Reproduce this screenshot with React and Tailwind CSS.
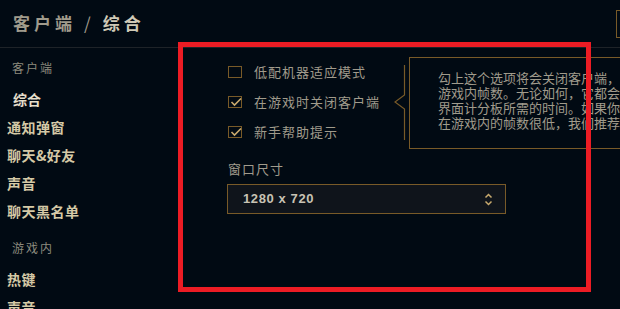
import { useState } from "react";

const sideItems = [
  { label: "客户端", type: "heading" },
  { label: "综合", type: "active" },
  { label: "通知弹窗" },
  { label: "聊天&好友" },
  { label: "声音" },
  { label: "聊天黑名单" },
  { label: "游戏内", type: "heading", gap: true },
  { label: "热键" },
  { label: "声音" },
];

const options = [
  { label: "低配机器适应模式", checked: false },
  { label: "在游戏时关闭客户端", checked: true, tip: true },
  { label: "新手帮助提示", checked: true },
];

const tipLines = [
  "勾上这个选项将会关闭客户端，以提高",
  "游戏内帧数。无论如何，它都会增加",
  "界面计分板所需的时间。如果你的电脑",
  "在游戏内的帧数很低，我们推荐你勾选",
];

const Checkbox = ({ checked, onClick }) => (
  <button
    onClick={onClick}
    className="relative w-[14px] h-[12px] border border-[#785a28] shrink-0"
  >
    {checked && (
      <svg className="absolute left-[1px] top-[0px]" width="12" height="10" viewBox="0 0 12 10">
        <path d="M1.5 5 L4.5 8 L11 1.5" stroke="#c8aa6e" strokeWidth="1.6" fill="none" />
      </svg>
    )}
  </button>
);

const Tooltip = () => (
  <div className="absolute left-[166px] top-[-30px] flex items-stretch">
    {/* left edge ornament with arrow */}
    <svg width="15" height="92" viewBox="0 0 15 92" className="shrink-0">
      <path d="M10.5 8 V38 L1 45 L10.5 52 V83" stroke="#785a28" strokeWidth="1.2" fill="none" />
    </svg>
    <div className="w-[300px] h-[92px] border border-[#785a28] bg-[#010a13] pl-[28px] pt-[12px]">
      {tipLines.map((line, i) => (
        <div key={i} className="text-[13px] leading-[15px] text-[#a09b8c] whitespace-nowrap">
          {line}
        </div>
      ))}
    </div>
  </div>
);

const App = () => {
  const [checks, setChecks] = useState(options.map((o) => o.checked));

  const toggle = (i) => {
    setChecks((prev) => prev.map((c, idx) => (idx === i ? !c : c)));
  };

  return (
    <div
      className="relative w-[620px] h-[309px] overflow-hidden bg-[#010a13]"
      style={{ fontFamily: '"Noto Sans CJK SC", "Liberation Sans", sans-serif' }}
    >
      {/* header */}
      <div className="flex items-center h-[48px] border-b border-[#1e2328] pl-[13px] pb-[2px]">
        <div className="flex items-center text-[17px] tracking-[4px] font-bold">
          <span className="text-[#a09b8c]">客户端</span>
          <span className="text-[#a09b8c] mx-[8px] font-normal">/</span>
          <span className="text-[#cfc9b6]">综合</span>
        </div>
        <div className="ml-auto mr-[-56px] mt-[2px] w-[60px] h-[28px] border border-[#785a28] shrink-0"></div>
      </div>

      <div className="flex">
        {/* sidebar */}
        <div className="w-[180px] pt-[6px] flex flex-col">
          {sideItems.map((item, i) => {
            if (item.type === "heading") {
              return (
                <div
                  key={i}
                  className={`h-[28px] flex items-center pl-[12px] text-[12px] tracking-[2px] text-[#8c8a7e] ${item.gap ? "mt-[9px]" : ""}`}
                >
                  {item.label}
                </div>
              );
            }
            if (item.type === "active") {
              return (
                <div key={i} className="h-[28px] mt-[3px] flex items-center pl-[13px] text-[14px] font-bold text-[#e6dfcb]">
                  {item.label}
                </div>
              );
            }
            return (
              <div
                key={i}
                className={`h-[28px] flex items-center pl-[7px] text-[14px] font-bold tracking-[0.5px] text-[#d5c9a6] ${i === 7 ? "mt-[3px]" : ""}`}
              >
                {item.label}
              </div>
            );
          })}
        </div>

        {/* content */}
        <div className="flex-1 pl-[48px] pt-[9px]">
          {options.map((opt, i) => (
            <div key={i} className="relative h-[30px] flex items-center gap-[12px]">
              <Checkbox checked={checks[i]} onClick={() => toggle(i)} />
              <span className="text-[13px] tracking-[1px] text-[#a09b8c] whitespace-nowrap">{opt.label}</span>
              {opt.tip && <Tooltip />}
            </div>
          ))}

          <div className="mt-[14px] h-[16px] flex items-center text-[13px] tracking-[1px] text-[#a09b8c]">
            窗口尺寸
          </div>

          <div className="mt-[7px] ml-[-1px] w-[279px] h-[30px] border border-[#785a28] bg-[#0f141b] flex items-center justify-between pl-[15px] pr-[12px]">
            <span
              className="text-[13px] font-bold tracking-[0.6px] text-[#c8c3b4]"
              style={{ fontFamily: '"Liberation Sans", sans-serif' }}
            >
              1280 x 720
            </span>
            <svg width="9" height="13" viewBox="0 0 9 13">
              <path d="M1.5 4.5 L4.5 1.5 L7.5 4.5" stroke="#c8aa6e" strokeWidth="1.5" fill="none" />
              <path d="M1.5 8.5 L4.5 11.5 L7.5 8.5" stroke="#c8aa6e" strokeWidth="1.5" fill="none" />
            </svg>
          </div>
        </div>
      </div>

      {/* red annotation frame */}
      <div className="absolute left-[178px] top-[42px] w-[413px] h-[250px] border-[5px] border-[#ec1c24] pointer-events-none"></div>
    </div>
  );
};

export default App;
